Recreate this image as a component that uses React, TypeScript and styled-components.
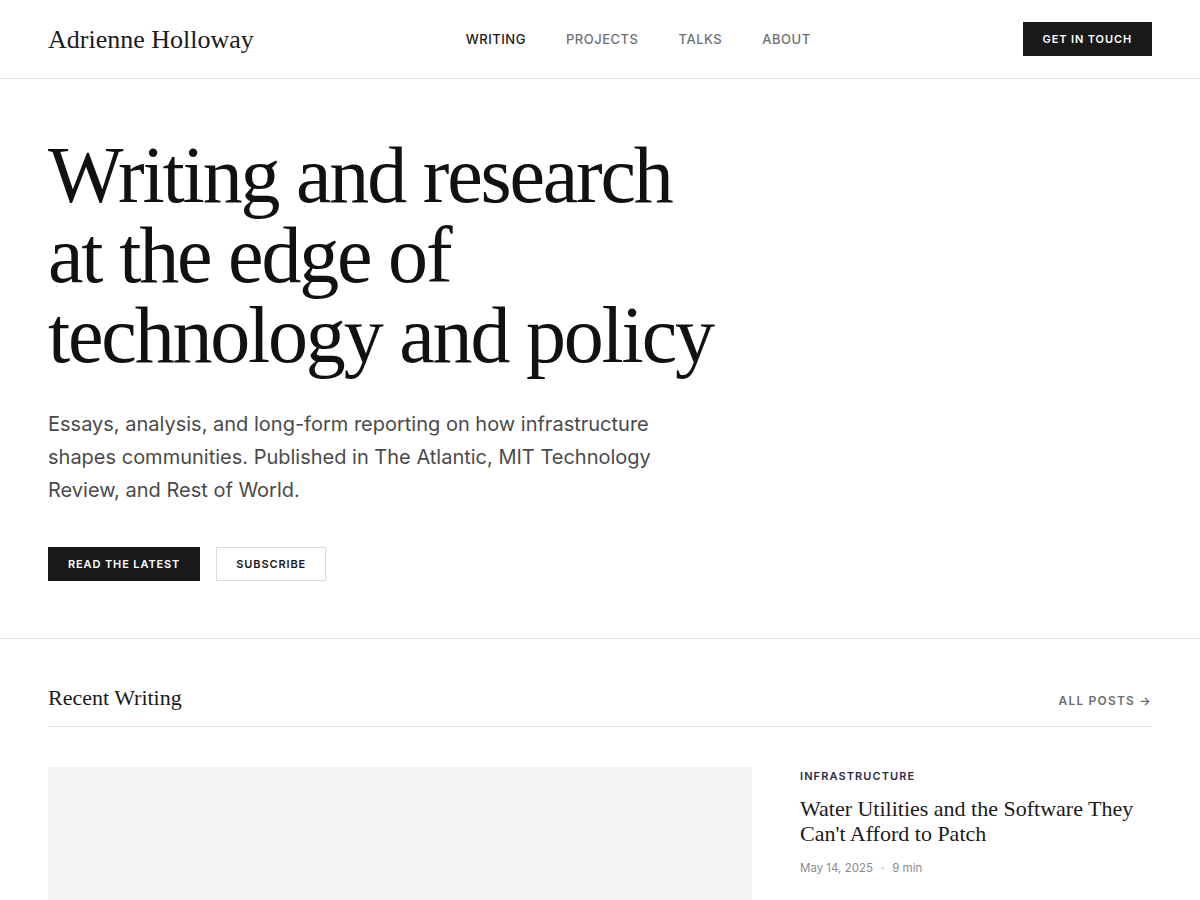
import styled, { createGlobalStyle } from "styled-components";

const GlobalStyle = createGlobalStyle`
  * { box-sizing: border-box; }
  body {
    margin: 0;
    background: #fff;
    color: #1a1a1a;
    font-family: Inter, "Liberation Sans", sans-serif;
  }
`;

const serif = `"Liberation Serif", "DejaVu Serif", serif`;

const Header = styled.header`
  height: 79px;
  border-bottom: 1px solid #e2e2e2;
`;

const Container = styled.div`
  max-width: 1200px;
  margin: 0 auto;
  padding: 0 48px;
`;

const HeaderInner = styled(Container)`
  height: 100%;
  display: flex;
  justify-content: space-between;
  align-items: center;
`;

const Logo = styled.a`
  font-family: ${serif};
  font-size: 26px;
  color: #1a1a1a;
  text-decoration: none;
  letter-spacing: 0;
  padding-top: 2px;
`;

const Nav = styled.nav`
  display: flex;
  gap: 40px;
`;

const NavLink = styled.a<{ $active?: boolean }>`
  font-size: 13px;
  font-weight: 500;
  letter-spacing: 0.04em;
  text-transform: uppercase;
  color: ${(p) => (p.$active ? "#1a1a1a" : "#707070")};
  text-decoration: none;
`;

const Button = styled.a<{ $outline?: boolean }>`
  display: inline-flex;
  align-items: center;
  justify-content: center;
  height: 34px;
  padding: 0 19px;
  font-size: 11px;
  font-weight: 600;
  letter-spacing: 0.08em;
  text-transform: uppercase;
  text-decoration: none;
  background: ${(p) => (p.$outline ? "#fff" : "#1a1a1a")};
  color: ${(p) => (p.$outline ? "#1a1a1a" : "#fff")};
  border: 1px solid ${(p) => (p.$outline ? "#dcdcdc" : "#1a1a1a")};
`;

const Hero = styled.section`
  border-bottom: 1px solid #e2e2e2;
  padding: 56px 0 57px;
`;

const HeroTitle = styled.h1`
  margin: 0;
  font-family: ${serif};
  font-weight: 400;
  font-size: 80px;
  line-height: 80px;
  letter-spacing: -2.2px;
  color: #111;
`;

const Lead = styled.p`
  margin: 33px 0 0;
  max-width: 620px;
  font-size: 20px;
  line-height: 33px;
  color: #4a4a4a;
  font-weight: 400;
`;

const Actions = styled.div`
  display: flex;
  gap: 16px;
  margin-top: 40px;
`;

const Recent = styled.section`
  padding-top: 46px;
`;

const SectionHead = styled.div`
  display: flex;
  justify-content: space-between;
  align-items: baseline;
  padding-bottom: 15px;
  border-bottom: 1px solid #e2e2e2;
`;

const SectionTitle = styled.h2`
  margin: 0;
  font-family: ${serif};
  font-weight: 400;
  font-size: 22px;
  color: #1a1a1a;
`;

const MoreLink = styled.a`
  font-size: 12px;
  font-weight: 600;
  letter-spacing: 0.1em;
  color: #6e6e6e;
  text-decoration: none;
`;

const Featured = styled.div`
  display: grid;
  grid-template-columns: 2fr 1fr;
  gap: 48px;
  margin-top: 40px;
`;

const ImagePlaceholder = styled.div`
  height: 260px;
  background: #f4f4f4;
`;

const Article = styled.article`
  padding-top: 2px;
`;

const Kicker = styled.div`
  font-size: 11px;
  font-weight: 600;
  letter-spacing: 0.1em;
  color: #2b2d4f;
`;

const ArticleTitle = styled.h3`
  margin: 13px 0 0;
  font-family: ${serif};
  font-weight: 400;
  font-size: 22px;
  line-height: 25px;
  color: #1a1a1a;
`;

const Meta = styled.div`
  margin-top: 15px;
  font-size: 11.5px;
  color: #8a8a8a;
  display: flex;
  gap: 8px;
`;

export default function App() {
  return (
    <>
      <GlobalStyle />
      <Header>
        <HeaderInner>
          <Logo href="#">Adrienne Holloway</Logo>
          <Nav>
            <NavLink href="#" $active>
              Writing
            </NavLink>
            <NavLink href="#">Projects</NavLink>
            <NavLink href="#">Talks</NavLink>
            <NavLink href="#">About</NavLink>
          </Nav>
          <Button href="#">Get in touch</Button>
        </HeaderInner>
      </Header>

      <Hero>
        <Container>
          <HeroTitle>
            Writing and research
            <br />
            at the edge of
            <br />
            technology and policy
          </HeroTitle>
          <Lead>
            Essays, analysis, and long-form reporting on how infrastructure
            shapes communities. Published in The Atlantic, MIT Technology
            Review, and Rest of World.
          </Lead>
          <Actions>
            <Button href="#">Read the latest</Button>
            <Button href="#" $outline>
              Subscribe
            </Button>
          </Actions>
        </Container>
      </Hero>

      <Recent>
        <Container>
          <SectionHead>
            <SectionTitle>Recent Writing</SectionTitle>
            <MoreLink href="#">ALL POSTS →</MoreLink>
          </SectionHead>
          <Featured>
            <ImagePlaceholder />
            <Article>
              <Kicker>INFRASTRUCTURE</Kicker>
              <ArticleTitle>
                Water Utilities and the Software They Can't Afford to Patch
              </ArticleTitle>
              <Meta>
                <span>May 14, 2025</span>
                <span>·</span>
                <span>9 min</span>
              </Meta>
            </Article>
          </Featured>
        </Container>
      </Recent>
    </>
  );
}
